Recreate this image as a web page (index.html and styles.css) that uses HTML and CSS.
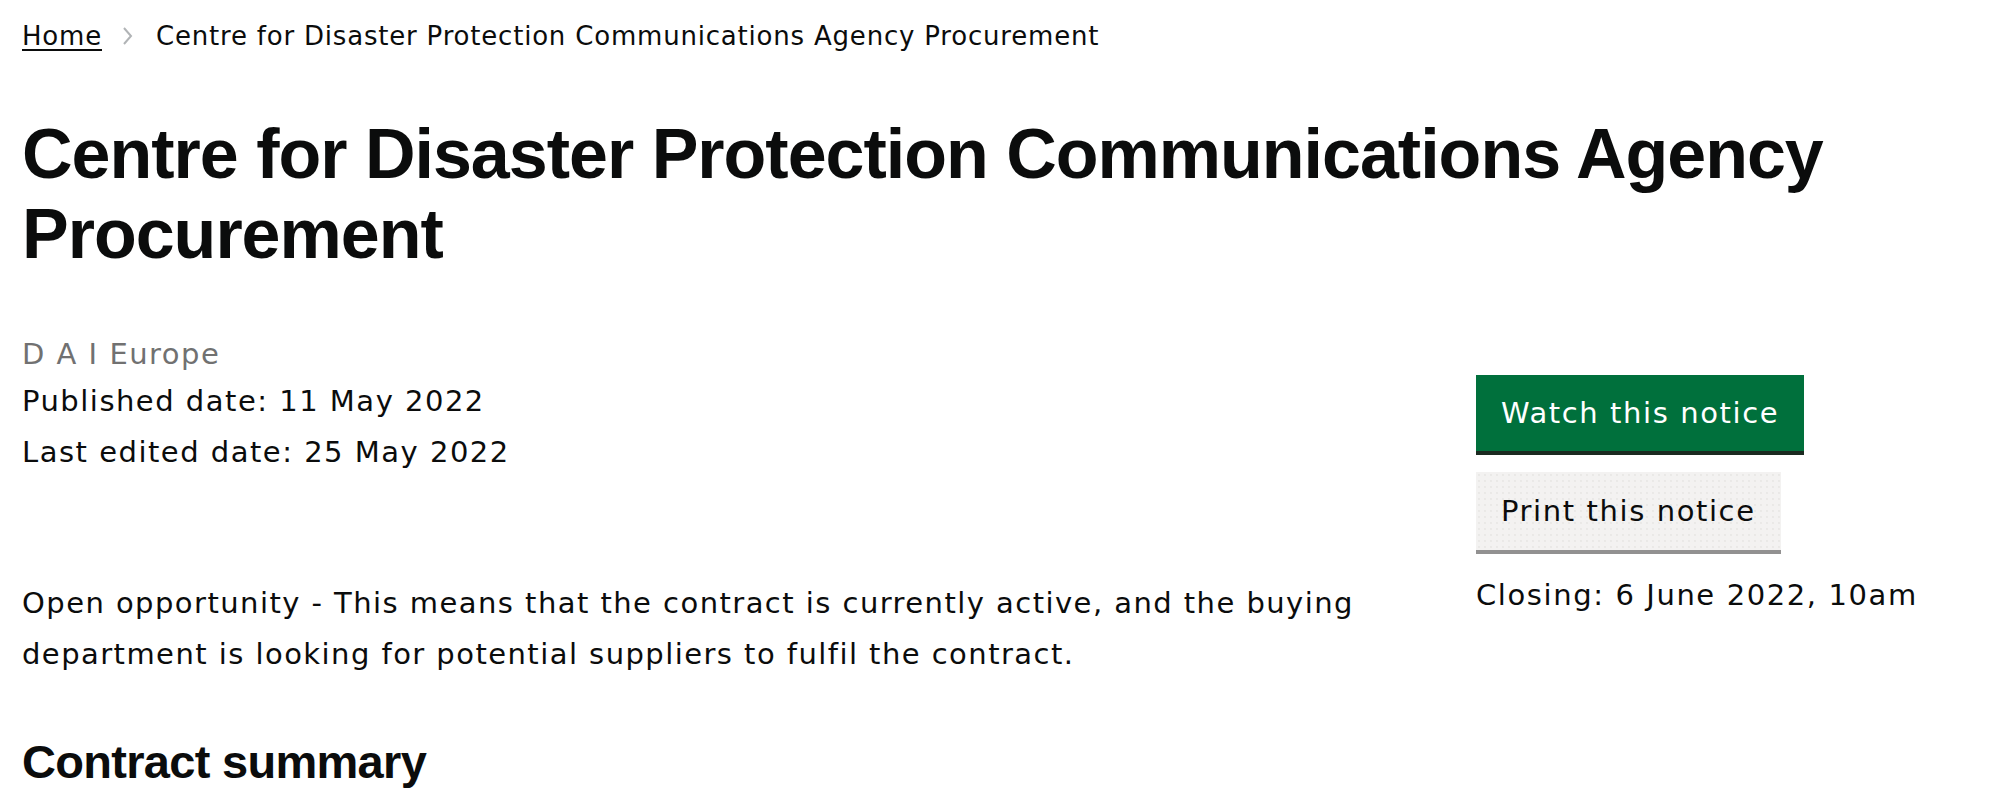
FILE: index.html
```html
<!DOCTYPE html>
<html lang="en">
<head>
<meta charset="utf-8">
<title>Centre for Disaster Protection Communications Agency Procurement</title>
<link rel="stylesheet" href="styles.css">
</head>
<body>
<div class="page">
  <nav class="breadcrumbs">
    <a class="crumb-link" href="#">Home</a>
    <svg class="chevron" width="12" height="20" viewBox="0 0 12 20"><path d="M2 2 L9 10 L2 18" fill="none" stroke="#b1b4b6" stroke-width="2"/></svg>
    <span class="crumb-current">Centre for Disaster Protection Communications Agency Procurement</span>
  </nav>
  <h1 class="title">Centre for Disaster Protection Communications Agency Procurement</h1>
  <div class="row">
    <div class="main-col">
      <div class="meta">
        <p class="buyer">D A I Europe</p>
        <p class="meta-line">Published date: 11 May 2022</p>
        <p class="meta-line last">Last edited date: 25 May 2022</p>
      </div>
      <p class="status">Open opportunity - This means that the contract is currently active, and the buying department is looking for potential suppliers to fulfil the contract.</p>
      <h2 class="section-title">Contract summary</h2>
    </div>
    <div class="side-col">
      <a class="btn btn-primary" href="#">Watch this notice</a>
      <a class="btn btn-secondary" href="#">Print this notice</a>
      <p class="closing">Closing: 6 June 2022, 10am</p>
    </div>
  </div>
</div>
</body>
</html>
```

FILE: styles.css
```css
* { box-sizing: border-box; }
html, body { margin: 0; padding: 0; background: #ffffff; }
body {
  font-family: "DejaVu Sans", "Liberation Sans", Arial, sans-serif;
  color: #0b0c0c;
}
.page {
  padding: 18px 22px 0 22px;
}
.breadcrumbs {
  display: flex;
  align-items: center;
  font-size: 26px;
  letter-spacing: 0.8px;
  line-height: 36px;
  height: 36px;
}
.crumb-link {
  color: #0b0c0c;
  text-decoration: underline;
  text-decoration-thickness: 2px;
  text-underline-offset: 4px;
}
.chevron {
  margin: 0 22px 0 20px;
}
.crumb-current { color: #0b0c0c; }
.title {
  margin: 60px 0 0 0;
  font-family: "Liberation Sans", Arial, sans-serif;
  font-size: 70px;
  line-height: 80px;
  font-weight: 700;
  letter-spacing: -1px;
}
.row {
  display: flex;
  gap: 45px;
  margin-top: 57px;
}
.main-col {
  width: 1409px;
  flex: none;
}
.side-col {
  flex: 1;
  padding-top: 44px;
}
.meta p { margin: 0; font-size: 29px; letter-spacing: 1.5px; line-height: 47px; }
.meta .last { margin-top: 4px; }
.buyer { color: #717171; }
.status {
  margin: 102px 0 0 0;
  font-size: 29px;
  letter-spacing: 1.45px;
  line-height: 51px;
}
.section-title {
  margin: 52px 0 0 0;
  font-family: "Liberation Sans", Arial, sans-serif;
  font-size: 47px;
  line-height: 60px;
  font-weight: 700;
  letter-spacing: -0.7px;
}
.btn {
  display: table;
  height: 76px;
  line-height: 76px;
  padding: 0 25px;
  font-size: 29px;
  letter-spacing: 1.6px;
  text-decoration: none;
}
.btn-primary {
  background: #00703c;
  color: #ffffff;
  box-shadow: 0 4px 0 #1b2a20;
}
.btn-secondary {
  margin-top: 21px;
  background-color: #f3f2f1;
  background-image: radial-gradient(circle, #e9e8e6 0.7px, transparent 1.2px);
  background-size: 6px 6px;
  color: #0b0c0c;
  box-shadow: 0 4px 0 #929191;
  height: 75px;
  line-height: 78px;
}
.closing {
  margin: 22px 0 0 0;
  font-size: 29px;
  letter-spacing: 1.6px;
  line-height: 47px;
}
```
